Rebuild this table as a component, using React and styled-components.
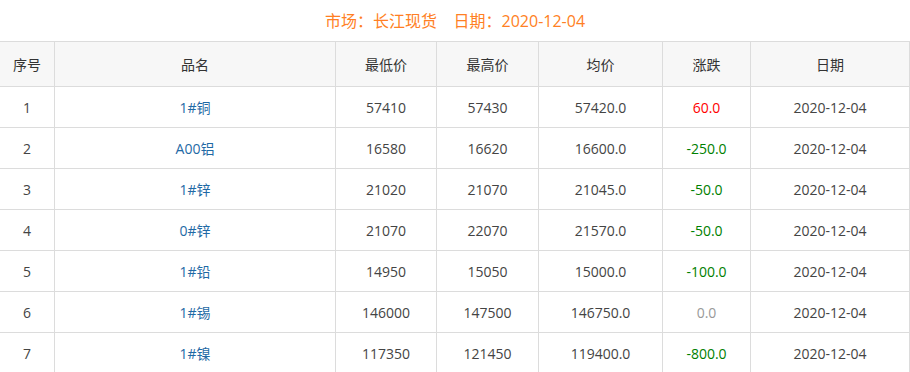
import React from "react";
import styled, { createGlobalStyle } from "styled-components";

const GlobalStyle = createGlobalStyle`
  body {
    margin: 0;
    background: #fff;
    font-family: "Open Sans", "Noto Sans CJK SC", sans-serif;
    overflow: hidden;
  }
`;

const Page = styled.div`
  width: 910px;
`;

const Title = styled.h3`
  margin: 0;
  height: 41px;
  line-height: 42px;
  text-align: center;
  font-size: 16px;
  font-weight: normal;
  color: #ff7f24;
  white-space: pre;
`;

const Table = styled.table`
  border-collapse: collapse;
  margin-left: -1px;
  width: 910px;
  table-layout: fixed;
  font-size: 14px;
  color: #444;
`;

const Th = styled.th`
  height: 44px;
  padding: 0;
  font-weight: normal;
  background: #f7f7f7;
  border: 1px solid #dcdcdc;
  text-align: center;
  color: #333;
`;

const Td = styled.td`
  height: 40px;
  padding: 0;
  border: 1px solid #dcdcdc;
  text-align: center;
  color: ${(p) => p.$color || "#444"};
`;

const changeColor = (v) => {
  if (v > 0) return "#ff0000";
  if (v < 0) return "#008000";
  return "#999";
};

const rows = [
  ["1", "1#铜", 57410, 57430, "57420.0", 60],
  ["2", "A00铝", 16580, 16620, "16600.0", -250],
  ["3", "1#锌", 21020, 21070, "21045.0", -50],
  ["4", "0#锌", 21070, 22070, "21570.0", -50],
  ["5", "1#铅", 14950, 15050, "15000.0", -100],
  ["6", "1#锡", 146000, 147500, "146750.0", 0],
  ["7", "1#镍", 117350, 121450, "119400.0", -800],
];

const widths = [55, 281, 101, 102, 124, 88, 159];
const heads = ["序号", "品名", "最低价", "最高价", "均价", "涨跌", "日期"];

export default function App() {
  return (
    <Page>
      <GlobalStyle />
      <Title>{"市场：长江现货    日期：2020-12-04"}</Title>
      <Table>
        <colgroup>
          {widths.map((w, i) => (
            <col key={i} style={{ width: w }} />
          ))}
        </colgroup>
        <thead>
          <tr>
            {heads.map((h) => (
              <Th key={h}>{h}</Th>
            ))}
          </tr>
        </thead>
        <tbody>
          {rows.map((r) => (
            <tr key={r[0]}>
              <Td>{r[0]}</Td>
              <Td $color="#1f6aa5">{r[1]}</Td>
              <Td>{r[2]}</Td>
              <Td>{r[3]}</Td>
              <Td>{r[4]}</Td>
              <Td $color={changeColor(r[5])}>{r[5].toFixed(1)}</Td>
              <Td>2020-12-04</Td>
            </tr>
          ))}
        </tbody>
      </Table>
    </Page>
  );
}
